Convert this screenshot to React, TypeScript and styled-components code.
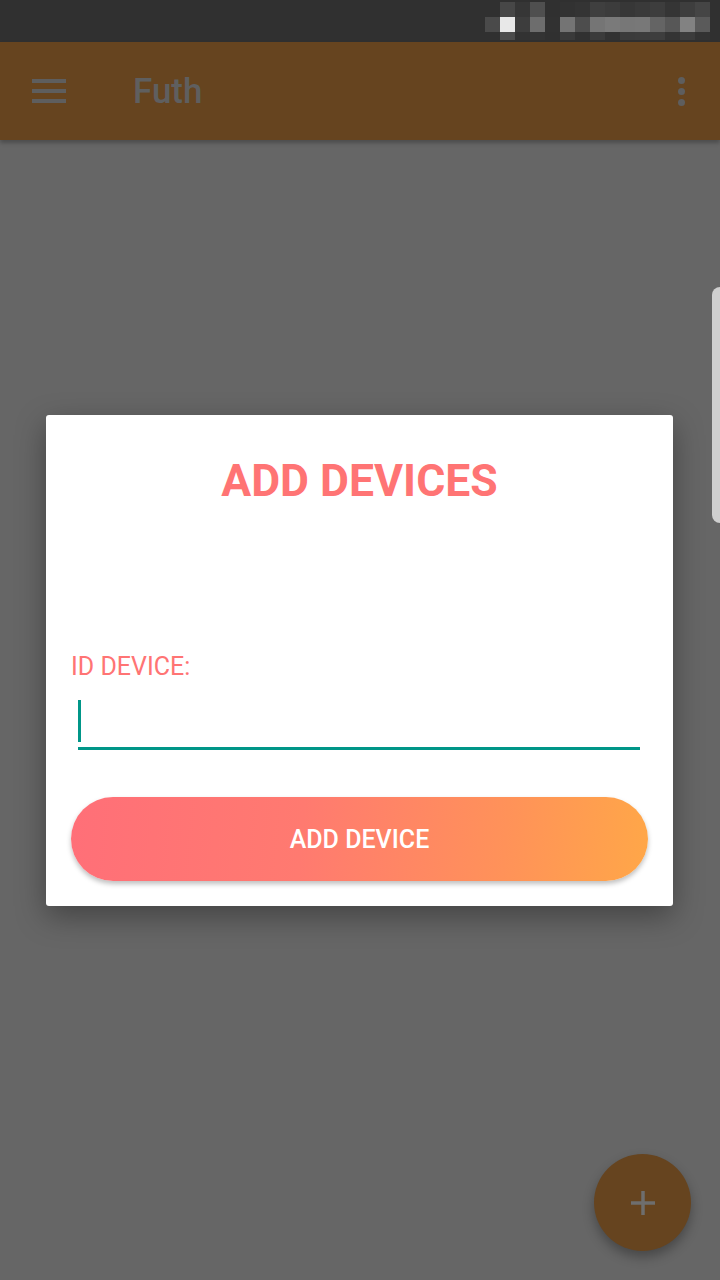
import React from 'react';
import styled, { createGlobalStyle } from 'styled-components';

const GlobalStyle = createGlobalStyle`
  html, body {
    margin: 0;
    padding: 0;
    background: #666666;
    font-family: Roboto, "Liberation Sans", sans-serif;
  }
`

const Screen = styled.div`
  position: relative;
  width: 720px;
  height: 1280px;
  overflow: hidden;
  background: #666666;
  display: flex;
  flex-direction: column;
`

const StatusBar = styled.div`
  height: 42px;
  background: #303030;
  display: flex;
  justify-content: flex-end;
  align-items: stretch;
  padding-right: 10px;
`

const Pixel = styled.div<{ shade: string }>`
  width: 15px;
  background: ${p => p.shade};
`

const PixelCol = styled.div`
  display: flex;
  flex-direction: column;
  justify-content: center;
`

const AppBar = styled.header`
  height: 98px;
  background: #66441f;
  display: flex;
  align-items: center;
  padding: 0 32px;
  box-shadow: 0 3px 4px rgba(0, 0, 0, 0.25);
  position: relative;
  z-index: 1;
`

const MenuIcon = styled.div`
  width: 34px;
  display: flex;
  flex-direction: column;
  gap: 6px;

  span {
    height: 4px;
    background: #5e5e5e;
  }
`

const Title = styled.h1`
  margin: 0 0 0 67px;
  font-size: 35px;
  font-weight: 500;
  color: #5f5f5f;
  flex: 1;
`

const MoreIcon = styled.div`
  display: flex;
  flex-direction: column;
  gap: 4px;
  margin-right: 3px;

  span {
    width: 7px;
    height: 7px;
    border-radius: 50%;
    background: #5e5e5e;
  }
`

const Body = styled.main`
  flex: 1;
  display: flex;
  justify-content: flex-start;
  padding: 275px 0 0 46px;
`

const Dialog = styled.div`
  width: 627px;
  height: 491px;
  box-sizing: border-box;
  background: #ffffff;
  border-radius: 3px;
  box-shadow: 0 10px 30px rgba(0, 0, 0, 0.35);
  padding: 44px 25px 0 25px;
  display: flex;
  flex-direction: column;
`

const DialogTitle = styled.h2`
  margin: 0;
  text-align: center;
  font-size: 44.5px;
  font-weight: 700;
  line-height: 44px;
  color: #ff7474;
`

const Label = styled.label`
  margin-top: 149px;
  font-size: 25px;
  line-height: 30px;
  color: #ff7474;
`

const Field = styled.div`
  margin: 18px 8px 0 7px;
  height: 47px;
  border-bottom: 3px solid #009688;
  display: flex;
  align-items: flex-start;
`

const Caret = styled.div`
  width: 3px;
  height: 42px;
  background: #009688;
`

const AddButton = styled.button`
  margin-top: 47px;
  height: 84px;
  border: none;
  border-radius: 42px;
  background: linear-gradient(95deg, #ff6f78 0%, #ff7a70 40%, #ff9259 75%, #ffa748 100%);
  box-shadow: 0 3px 5px rgba(0, 0, 0, 0.25);
  color: #ffffff;
  font-family: Roboto, "Liberation Sans", sans-serif;
  font-size: 25px;
  font-weight: 500;
`

const SideHandle = styled.div`
  position: absolute;
  right: 0;
  top: 287px;
  width: 8px;
  height: 236px;
  background: #cfcfcf;
  border-radius: 8px 0 0 8px;
`

const Fab = styled.button`
  position: absolute;
  left: 594px;
  top: 1154px;
  width: 97px;
  height: 97px;
  border-radius: 50%;
  border: none;
  background: #66441f;
  box-shadow: 0 6px 12px rgba(0, 0, 0, 0.3);
  display: flex;
  align-items: center;
  justify-content: center;
  padding: 0;
`

const statusPixels = [
  ['#303030', '#4a4a4a', '#303030'],
  ['#474747', '#e8e8e8', '#4c4c4c'],
  ['#363636', '#3d3d3d', '#323232'],
  ['#4f4f4f', '#6d6d6d', '#333333'],
  ['#303030', '#313131', '#303030'],
  ['#323232', '#747474', '#3a3a3a'],
  ['#343434', '#4d4d4d', '#313131'],
  ['#3f3f3f', '#757575', '#3b3b3b'],
  ['#3c3c3c', '#7a7a7a', '#323232'],
  ['#373737', '#777777', '#3b3b3b'],
  ['#3a3a3a', '#787878', '#3c3c3c'],
  ['#3d3d3d', '#646464', '#3e3e3e'],
  ['#353535', '#575757', '#343434'],
  ['#3e3e3e', '#828282', '#3c3c3c'],
  ['#454545', '#5a5a5a', '#333333'],
]

const App = () => {
  return (
    <Screen>
      <GlobalStyle />
      <StatusBar>
        {statusPixels.map((col, i) => (
          <PixelCol key={i}>
            <Pixel shade={col[0]} style={{ height: 15 }} />
            <Pixel shade={col[1]} style={{ height: 15 }} />
            <Pixel shade={col[2]} style={{ height: 8 }} />
          </PixelCol>
        ))}
      </StatusBar>
      <AppBar>
        <MenuIcon><span /><span /><span /></MenuIcon>
        <Title>Futh</Title>
        <MoreIcon><span /><span /><span /></MoreIcon>
      </AppBar>
      <Body>
        <Dialog>
          <DialogTitle>ADD DEVICES</DialogTitle>
          <Label>ID DEVICE:</Label>
          <Field><Caret /></Field>
          <AddButton>ADD DEVICE</AddButton>
        </Dialog>
      </Body>
      <SideHandle />
      <Fab>
        <svg width="28" height="28" viewBox="0 0 28 28">
          <path d="M14 2v24M2 14h24" stroke="#6e6e6e" strokeWidth="3.5" />
        </svg>
      </Fab>
    </Screen>
  );
}

export default App;
